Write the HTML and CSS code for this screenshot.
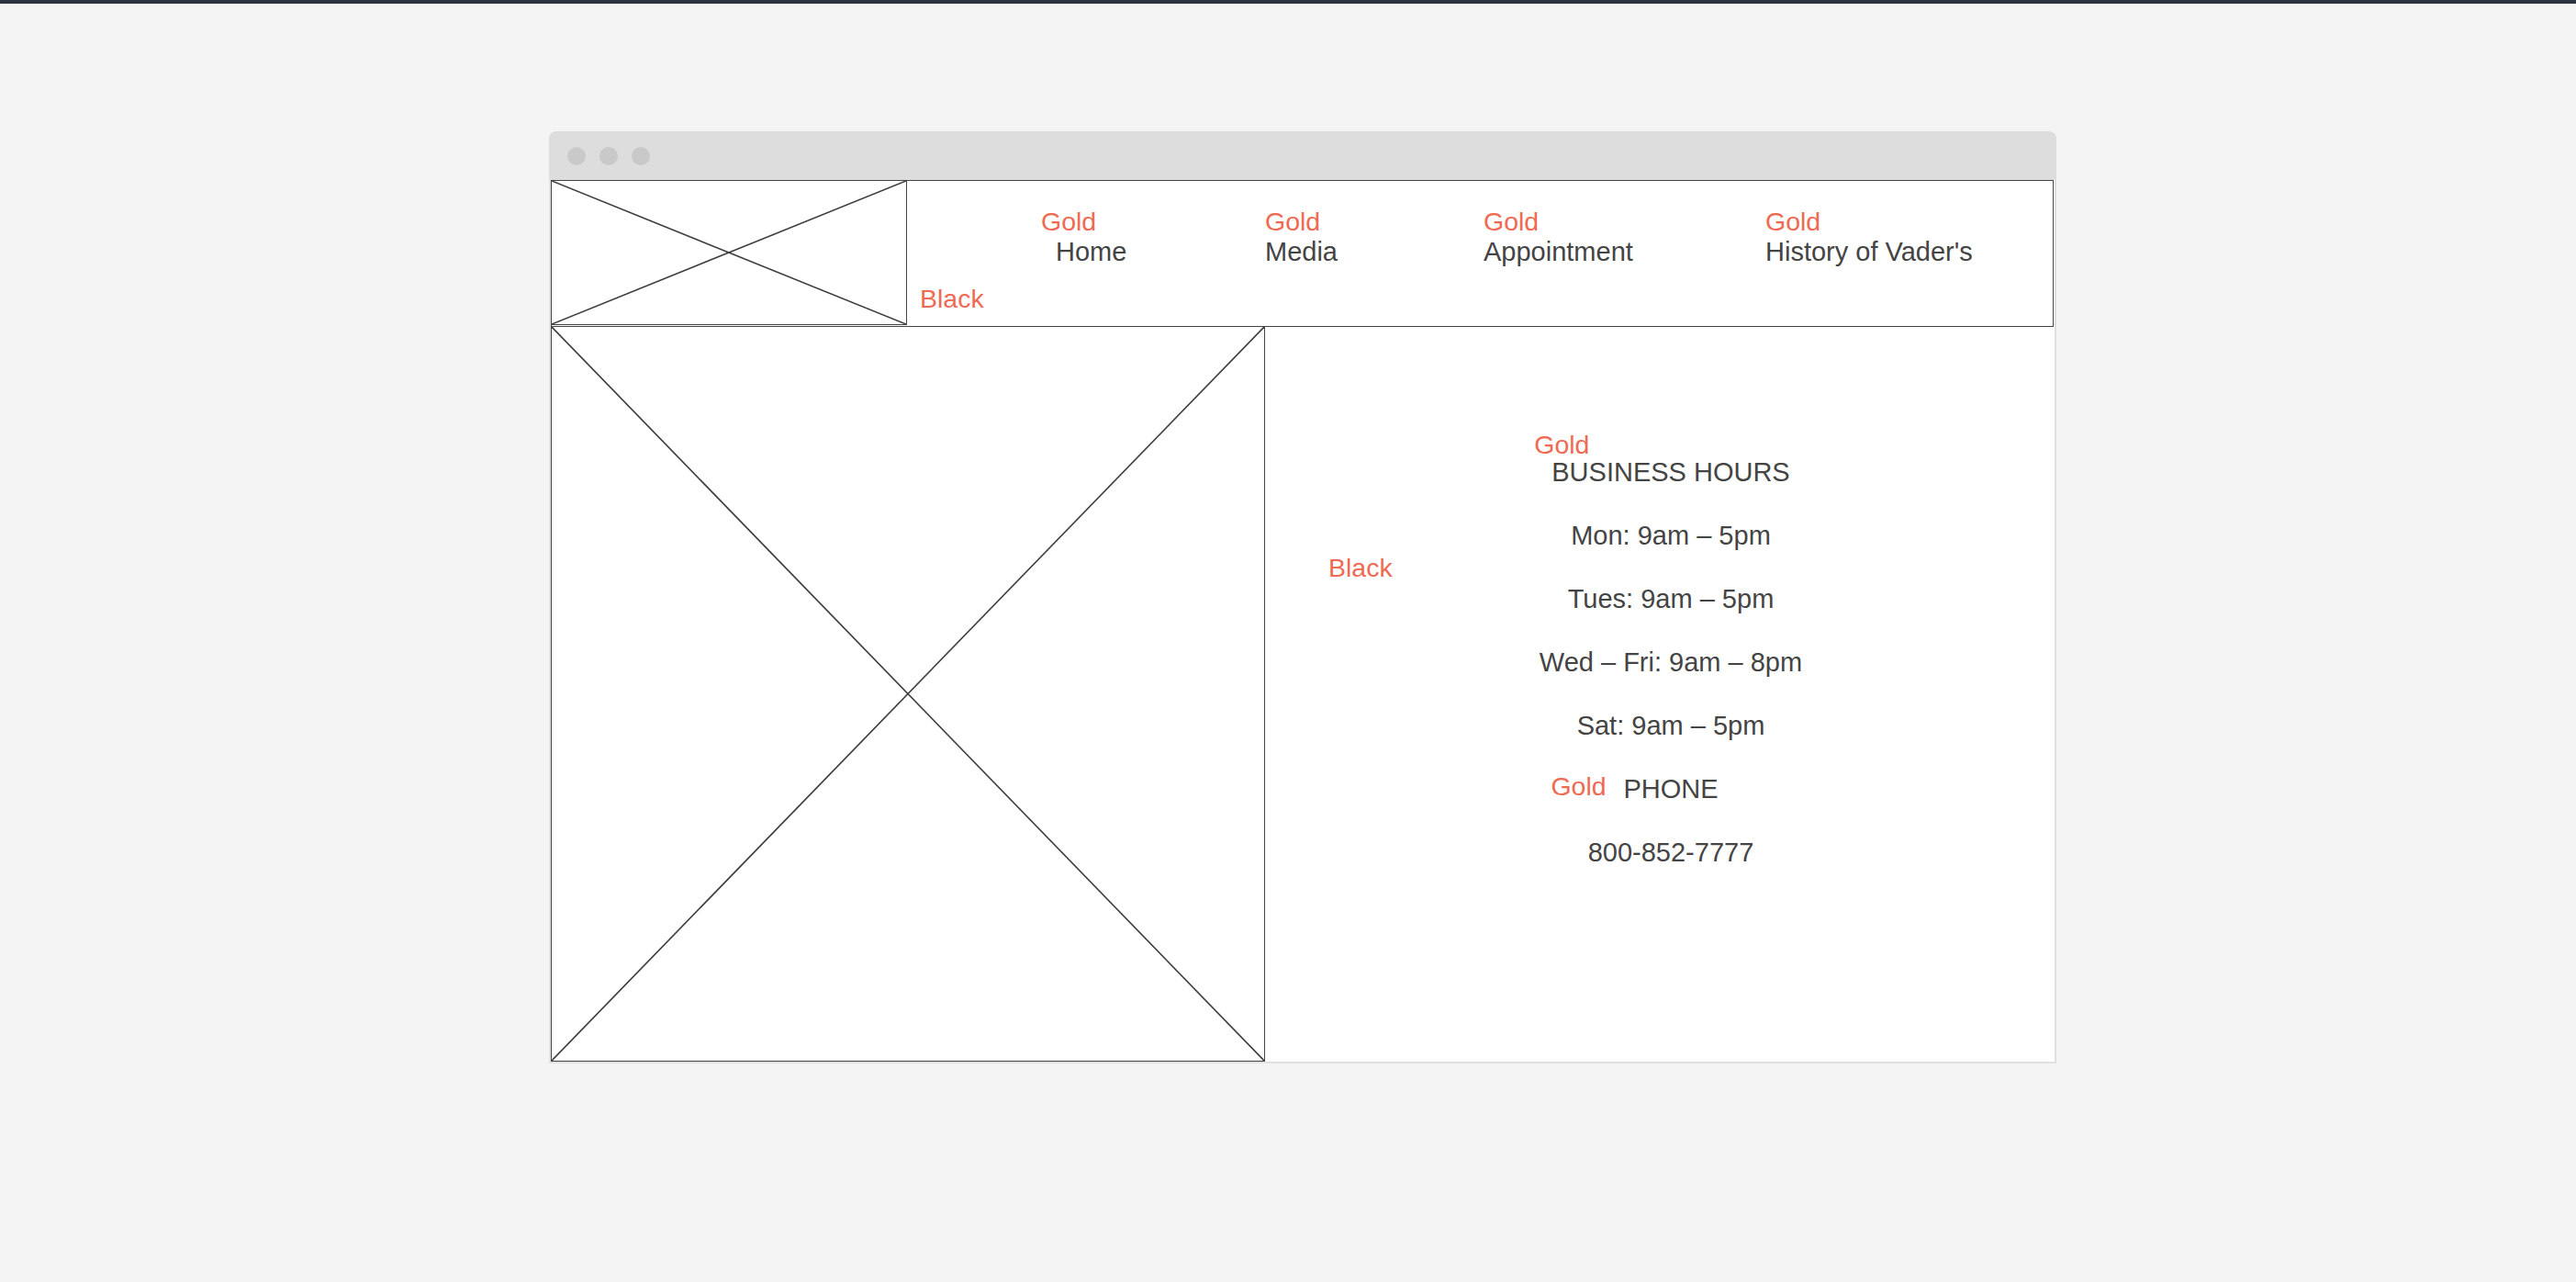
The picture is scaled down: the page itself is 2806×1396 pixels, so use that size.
FILE: index.html
```html
<!DOCTYPE html>
<html lang="en">

<head>
  <meta charset="utf-8" />
  <title>Vader's - Wireframe</title>
  <meta name="viewport" content="width=device-width, initial-scale=1" />
  <link rel="stylesheet" href="styles.css">
</head>

<body>
  <div class="topbar"></div>
  <div class="page">
    <div class="window">
      <div class="titlebar">
        <span class="dot"></span>
        <span class="dot"></span>
        <span class="dot"></span>
      </div>
      <div class="window-body">
        <!-- header: logo + navigation -->
        <header class="site-header">
          <div class="placeholder logo">
            <svg viewBox="0 0 100 100" preserveAspectRatio="none">
              <line x1="0" y1="0" x2="100" y2="100" vector-effect="non-scaling-stroke" />
              <line x1="100" y1="0" x2="0" y2="100" vector-effect="non-scaling-stroke" />
            </svg>
          </div>
          <nav class="nav">
            <a class="nav-item nav-home" href="#"><span class="note">Gold</span><span class="nav-link">Home</span></a>
            <a class="nav-item" href="#"><span class="note">Gold</span><span class="nav-link">Media</span></a>
            <a class="nav-item" href="#"><span class="note">Gold</span><span class="nav-link">Appointment</span></a>
            <a class="nav-item" href="#"><span class="note">Gold</span><span class="nav-link">History of Vader's</span></a>
          </nav>
          <span class="note note-header">Black</span>
        </header>

        <main class="content">
          <div class="placeholder hero">
            <svg viewBox="0 0 100 100" preserveAspectRatio="none">
              <line x1="0" y1="0" x2="100" y2="100" vector-effect="non-scaling-stroke" />
              <line x1="100" y1="0" x2="0" y2="100" vector-effect="non-scaling-stroke" />
            </svg>
          </div>
          <section class="info">
            <span class="note note-info">Black</span>
            <p class="info-line"><span class="anchor">BUSINESS HOURS<span class="note note-hours">Gold</span></span></p>
            <p class="info-line">Mon: 9am – 5pm</p>
            <p class="info-line">Tues: 9am – 5pm</p>
            <p class="info-line">Wed – Fri: 9am – 8pm</p>
            <p class="info-line">Sat: 9am – 5pm</p>
            <p class="info-line"><span class="anchor">PHONE<span class="note note-phone">Gold</span></span></p>
            <p class="info-line">800-852-7777</p>
          </section>
        </main>
      </div>
    </div>
  </div>
</body>

</html>
```

FILE: styles.css
```css
/* Reset & Global Styles */
* {
  box-sizing: border-box;
  margin: 0;
  padding: 0;
}

body {
  background-color: #f4f4f4;
  font-family: "Liberation Sans", Arial, sans-serif;
  color: #444;
}

.topbar {
  height: 4px;
  background-color: #2e3341;
}

.page {
  padding: 139px 0 0 598px;
}

.window {
  width: 1642px;
}

.titlebar {
  height: 53px;
  display: flex;
  align-items: center;
  gap: 15px;
  padding-left: 20px;
  background-color: #dddddd;
  border-radius: 8px 8px 0 0;
}

.dot {
  width: 20px;
  height: 20px;
  border-radius: 50%;
  background-color: #c9c9c9;
}

.window-body {
  background-color: #fff;
  border: 2px solid #e0e0e0;
  border-top: none;
}

/* placeholder boxes with the X */
.placeholder {
  border: 1px solid #444;
  background-color: #fff;
}

.placeholder svg {
  display: block;
  width: 100%;
  height: 100%;
}

.placeholder line {
  stroke: #3d3d3d;
  stroke-width: 1.6;
}

/* annotations */
.note {
  color: #ef6a52;
  font-size: 28.5px;
  line-height: 34px;
  white-space: nowrap;
}

/* header */
.site-header {
  position: relative;
  display: flex;
  height: 160px;
  margin-right: 1px;
  border: 1px solid #444;
}

.logo {
  width: 388px;
  height: 158px;
  margin: -1px 0 0 -1px;
}

.nav {
  display: grid;
  grid-template-columns: 228px 238px 307px auto;
  padding: 27px 0 0 162px;
}

.nav-item {
  display: block;
  text-decoration: none;
  color: #444;
}

.nav-item .note {
  display: block;
}

.nav-home .note {
  margin-left: -16px;
}

.nav-link {
  display: block;
  font-size: 29px;
  line-height: 33px;
}

.note-header {
  position: absolute;
  left: 401px;
  top: 111px;
}

/* main content */
.content {
  display: flex;
  height: 800px;
}

.hero {
  width: 778px;
  height: 801px;
  margin-top: -1px;
}

.info {
  position: relative;
  flex: 1;
  padding: 124px 0 0 24px;
  text-align: center;
}

.info-line {
  font-size: 29px;
  line-height: 69px;
}

.anchor {
  position: relative;
}

.note-info {
  position: absolute;
  left: 69px;
  top: 245px;
}

.note-hours {
  position: absolute;
  left: -19px;
  top: -31px;
}

.note-phone {
  position: absolute;
  left: -79px;
  top: -4px;
}
```
